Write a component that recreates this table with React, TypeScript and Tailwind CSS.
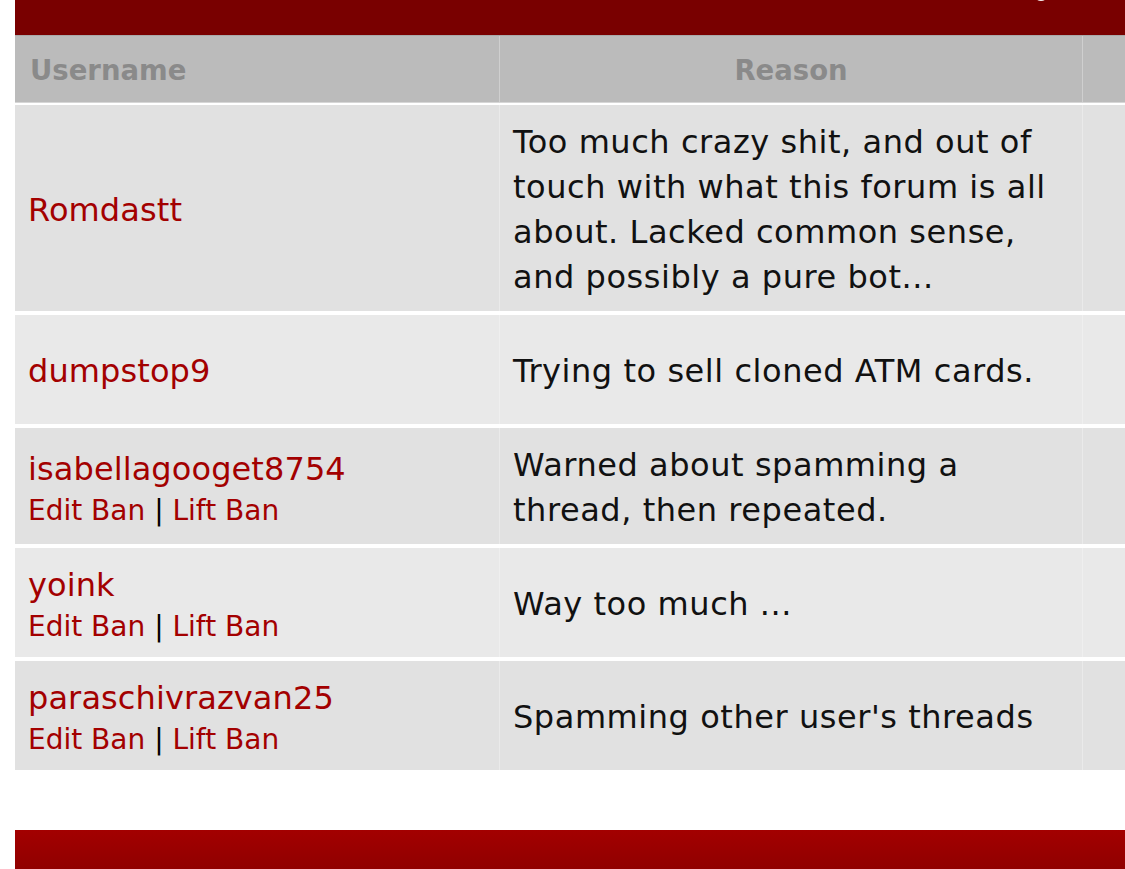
import React from "react";

type Row = {
  user: string;
  reason: string;
  links: boolean;
  bg: string;
};

const rows: Row[] = [
  {
    user: "Romdastt",
    reason:
      "Too much crazy shit, and out of touch with what this forum is all about. Lacked common sense, and possibly a pure bot...",
    links: false,
    bg: "bg-[#e1e1e1]",
  },
  { user: "dumpstop9", reason: "Trying to sell cloned ATM cards.", links: false, bg: "bg-[#e9e9e9]" },
  {
    user: "isabellagooget8754",
    reason: "Warned about spamming a thread, then repeated.",
    links: true,
    bg: "bg-[#e1e1e1]",
  },
  { user: "yoink", reason: "Way too much ...", links: true, bg: "bg-[#e9e9e9]" },
  { user: "paraschivrazvan25", reason: "Spamming other user's threads", links: true, bg: "bg-[#e1e1e1]" },
];

export default function App() {
  return (
    <div className="w-[1125px] h-[869px] overflow-hidden bg-white font-['DejaVu_Sans','Verdana',sans-serif]">
      <div className="ml-[15px] w-[1110px]">
        {/* top bar */}
        <div className="relative h-[35px] bg-[#790000]">
          <div className="absolute left-[1020px] top-[-10px] h-[11px] w-[12px] rounded-full bg-white/90" />
        </div>

        {/* header */}
        <div className="flex h-[67px] bg-[#bbbbbb] border-t border-[#a9a9a9] text-[27.5px] font-bold text-[#8a8a8a]">
          <div className="w-[485px] flex items-center pl-[15px] pr-[13px] pt-[4px] border-r border-white/30">Username</div>
          <div className="w-[583px] flex items-center justify-center px-[13px] pt-[4px] border-r border-white/30">Reason</div>
          <div className="flex-1" />
        </div>
        <div className="h-[3px] border-t border-[#d6d6d6] bg-white" />

        {/* rows */}
        <div className="flex flex-col gap-[4px]">
          {rows.map((r) => (
            <div key={r.user} className={`flex min-h-[109px] ${r.bg}`}>
              <div className="w-[485px] flex flex-col justify-center px-[13px] pt-[15px] pb-[11px] border-r border-white/30">
                <div className="text-[32px] leading-[45px] tracking-[0.1px] text-[#a30000]">{r.user}</div>
                {r.links && (
                  <div className="text-[28px] leading-[38px] text-black">
                    <span className="text-[#a30000]">Edit Ban</span> | <span className="text-[#a30000]">Lift Ban</span>
                  </div>
                )}
              </div>
              <div className="w-[583px] flex items-center px-[13px] pt-[15px] pb-[11px] border-r border-white/30">
                <div className="text-[32px] leading-[45px] tracking-[0.55px] text-[#111]">{r.reason}</div>
              </div>
              <div className="flex-1" />
            </div>
          ))}
        </div>

        <div className="h-[60px]" />

        {/* footer bar */}
        <div className="h-[39px] bg-gradient-to-b from-[#a30000] to-[#900000]" />
      </div>
    </div>
  );
}
